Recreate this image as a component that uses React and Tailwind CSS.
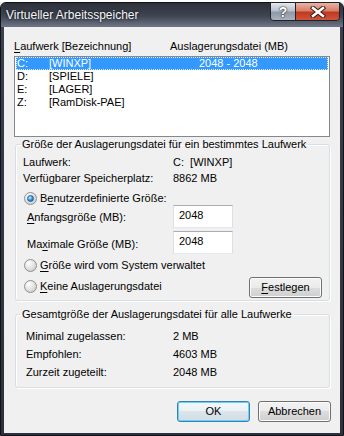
import React from 'react';

function U({ children }) {
  return <span className="underline underline-offset-[2px] decoration-[1px]">{children}</span>;
}

function Radio({ checked }) {
  return (
    <span className="w-[13px] h-[13px] rounded-full border border-[#8e8f8f] bg-[radial-gradient(circle_at_35%_30%,#ffffff,#dcdcdc_60%,#c2c2c2)] flex items-center justify-center shrink-0">
      {checked && (
        <span className="w-[7px] h-[7px] rounded-full border border-[#1b5d95] bg-[radial-gradient(circle_at_35%_30%,#c4f0ff,#3496e6_55%,#0b4f9c)]" />
      )}
    </span>
  );
}

function Btn({ children, primary, className = '' }) {
  const look = primary
    ? 'border-[#3c7fb1] bg-[linear-gradient(#f3f7f9,#eaf1f5_50%,#dbe5eb_50%,#d2dde4)] shadow-[inset_0_0_0_1px_#62d4f7]'
    : 'border-[#707070] bg-[linear-gradient(#f2f2f2,#ebebeb_50%,#dddddd_50%,#cfcfcf)] shadow-[inset_0_0_0_1px_#fcfcfc]';
  return (
    <div className={`h-[21px] w-[73px] rounded-[3px] border flex items-center justify-center ${look} ${className}`}>
      {children}
    </div>
  );
}

function Field({ value }) {
  return (
    <div className="w-[60px] h-[23px] bg-white border border-[#abadb3] border-b-[#e3e9ef] border-x-[#dbdfe6] pl-[5px] pt-[3px] leading-[13px]">
      {value}
    </div>
  );
}

const drives = [
  ['C:', '[WINXP]', '2048 - 2048'],
  ['D:', '[SPIELE]', ''],
  ['E:', '[LAGER]', ''],
  ['Z:', '[RamDisk-PAE]', ''],
];

export default function App() {
  return (
    <div className="w-[344px] h-[436px] bg-[#efece4] font-['Liberation_Sans',Arial,sans-serif] text-[11px] leading-[13px] text-black select-none">
      <div className="mt-[2px] h-[434px] rounded-t-[6px] border border-[#101218] bg-[linear-gradient(#3a404c,#2c313b)] flex flex-col">
        {/* Title bar */}
        <div className="h-[24px] flex items-start justify-between bg-[linear-gradient(#2b303a,#3f4552_55%,#6f7686)] rounded-t-[5px]">
          <span className="self-center pl-[5px] text-[12px] text-[#f4f6fa] [text-shadow:0_0_3px_#000]">
            Virtueller Arbeitsspeicher
          </span>
          <div className="mr-[3px] -mt-[1px] flex border border-[#1e2128] rounded-b-[4px] overflow-hidden">
            <div className="w-[25px] h-[17px] border-r border-[#1e2128] bg-[linear-gradient(#e4e8ee,#b9c1cc_45%,#8f99a7_55%,#a9b2bf)] flex items-center justify-center text-[14px] leading-[14px] font-bold text-white [text-shadow:0_0_2px_#222,0_0_1px_#000]">
              ?
            </div>
            <div className="w-[43px] h-[17px] bg-[linear-gradient(#eab3a3,#d7806a_45%,#c0391e_55%,#d0553b)] flex items-center justify-center">
              <svg width="16" height="12" viewBox="0 0 16 12">
                <path d="M3 2 L13 10 M13 2 L3 10" stroke="#3b1a12" strokeWidth="4.5" strokeLinecap="square" />
                <path d="M3 2 L13 10 M13 2 L3 10" stroke="#ffffff" strokeWidth="2.6" strokeLinecap="square" />
              </svg>
            </div>
          </div>
        </div>

        {/* Client area */}
        <div className="mx-[3px] mb-[2px] flex-1 bg-[#f0f0f0] flex flex-col">
          <div className="pt-[13px] pl-[10px] flex">
            <span className="w-[156px]"><U>L</U>aufwerk [Bezeichnung]</span>
            <span>Auslagerungsdatei (MB)</span>
          </div>

          <div className="mt-[3px] ml-[10px] w-[316px] h-[81px] border border-[#828790] bg-white px-[1px]">
            {drives.map(([d, n, s], i) => (
              <div
                key={d}
                className={`h-[13px] flex items-center border ${i === 0 ? 'bg-[#3399ff] text-white border-dotted border-[#d7ebff]' : 'border-transparent'}`}
              >
                <span className="w-[32px]">{d}</span>
                <span className="w-[150px]">{n}</span>
                <span>{s}</span>
              </div>
            ))}
          </div>

          <fieldset className="mt-[1px] ml-[11px] w-[315px] border border-[#d5dfe5] rounded-[3px] shadow-[inset_1px_1px_0_#ffffff,1px_1px_0_#ffffff]">
            <legend className="ml-[4px] px-[2px] leading-[13px]">Größe der Auslagerungsdatei für ein bestimmtes Laufwerk</legend>
            <div className="pl-[7px] pr-[7px] pt-[3px] pb-[3px] flex flex-col">
              <div className="h-[16px] flex items-center">
                <span className="w-[150px]">Laufwerk:</span>
                <span className="whitespace-pre">C:  [WINXP]</span>
              </div>
              <div className="h-[17px] flex items-center">
                <span className="w-[150px]">Verfügbarer Speicherplatz:</span>
                <span>8862 MB</span>
              </div>
              <div className="h-[18px] flex items-end pl-[1px] gap-[3px]">
                <Radio checked />
                <span>B<U>e</U>nutzerdefinierte Größe:</span>
              </div>
              <div className="h-[23px] flex items-center">
                <span className="w-[150px] pl-[4px] pt-[1px]"><U>A</U>nfangsgröße (MB):</span>
                <Field value="2048" />
              </div>
              <div className="mt-[3px] h-[23px] flex items-center">
                <span className="w-[150px] pl-[4px] pt-[3px]">Ma<U>x</U>imale Größe (MB):</span>
                <Field value="2048" />
              </div>
              <div className="mt-[5px] h-[13px] flex items-center pl-[1px] gap-[3px]">
                <Radio />
                <span><U>G</U>röße wird vom System verwaltet</span>
              </div>
              <div className="mt-[5px] h-[20px] flex items-center pl-[1px]">
                <div className="flex items-center gap-[3px] pb-[2px]">
                  <Radio />
                  <span><U>K</U>eine Auslagerungsdatei</span>
                </div>
                <Btn className="ml-auto h-[20px]"><span><U>F</U>estlegen</span></Btn>
              </div>
            </div>
          </fieldset>

          <fieldset className="mt-[7px] ml-[11px] w-[315px] border border-[#d5dfe5] rounded-[3px] shadow-[inset_1px_1px_0_#ffffff,1px_1px_0_#ffffff]">
            <legend className="ml-[4px] px-[2px] leading-[13px]">Gesamtgröße der Auslagerungsdatei für alle Laufwerke</legend>
            <div className="pl-[10px] pt-[6px] pb-[6px] flex flex-col">
              <div className="h-[18px] flex items-center">
                <span className="w-[147px]">Minimal zugelassen:</span>
                <span>2 MB</span>
              </div>
              <div className="h-[18px] flex items-center">
                <span className="w-[147px]">Empfohlen:</span>
                <span>4603 MB</span>
              </div>
              <div className="h-[18px] flex items-center">
                <span className="w-[147px]">Zurzeit zugeteilt:</span>
                <span>2048 MB</span>
              </div>
            </div>
          </fieldset>

          <div className="mt-[13px] pr-[9px] flex justify-end gap-[8px]">
            <Btn primary>OK</Btn>
            <Btn>Abbrechen</Btn>
          </div>
        </div>
      </div>
    </div>
  );
}
